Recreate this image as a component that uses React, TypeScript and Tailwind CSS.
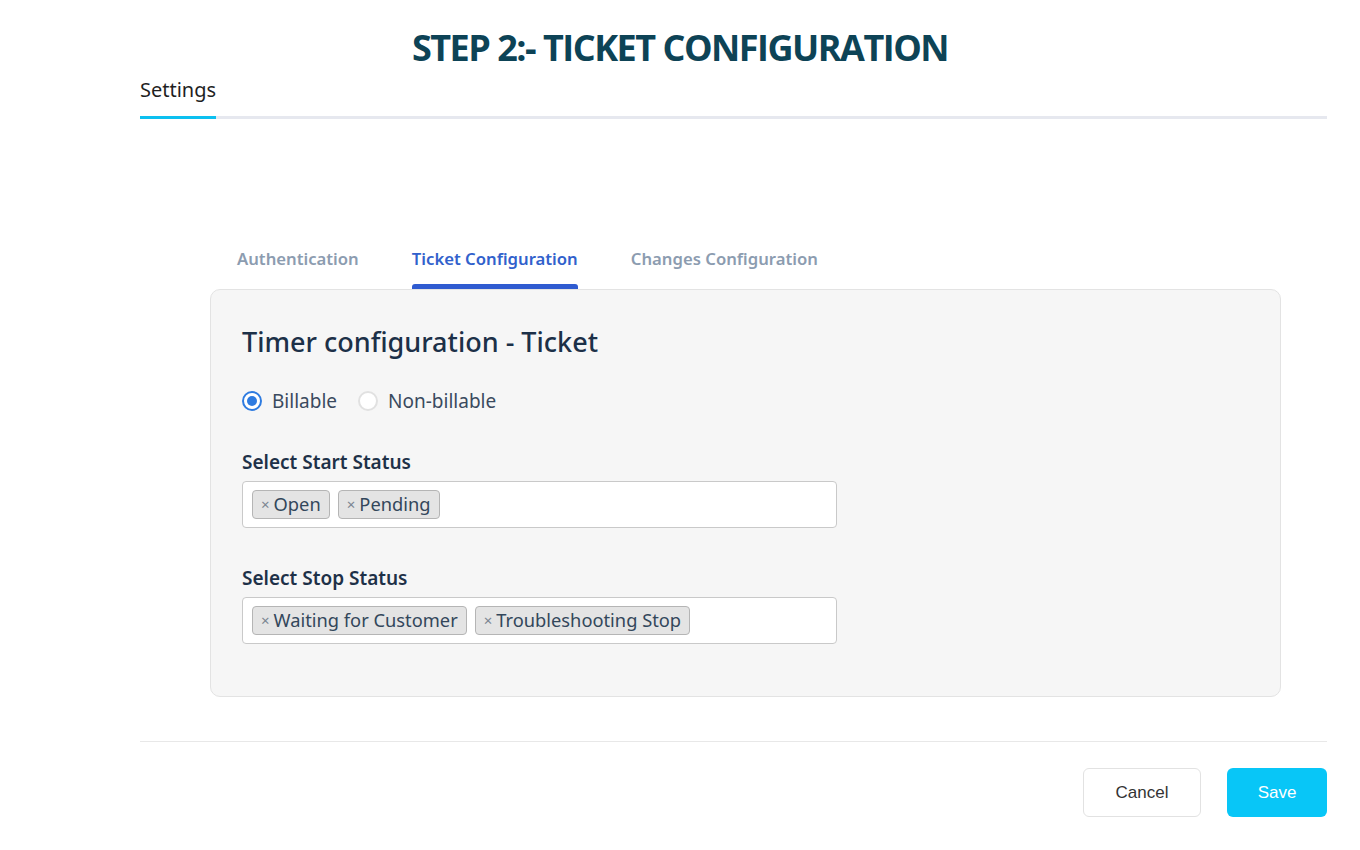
import { useState } from 'react';

type Chip = { id: string; label: string };

function ChipInput({ chips }: { chips: Chip[] }) {
  return (
    <div className="flex h-[47px] w-[595px] items-center gap-[8px] rounded-[4px] border border-[#c9c9c9] bg-white px-[9px]">
      {chips.map((c) => (
        <span
          key={c.id}
          className="flex h-[29px] items-center gap-[4px] rounded-[4px] border border-[#b5b5b5] bg-[#e4e4e4] px-[8px] text-[18.3px] leading-none text-[#33475b]"
        >
          <span className="text-[15px] text-[#7a8591]">×</span>
          {c.label}
        </span>
      ))}
    </div>
  );
}

function Radio({ checked, label, onSelect }: { checked: boolean; label: string; onSelect: () => void }) {
  return (
    <label className="flex cursor-pointer items-center gap-[10px]" onClick={onSelect}>
      <span
        className={`flex h-[20px] w-[20px] items-center justify-center rounded-full border-2 bg-white ${
          checked ? 'border-[#2e7be0]' : 'border-[#e1e1e1]'
        }`}
      >
        {checked ? <span className="h-[10px] w-[10px] rounded-full bg-[#2e7be0]" /> : null}
      </span>
      {label}
    </label>
  );
}

export default function App() {
  const [tab, setTab] = useState('ticket');
  const [billing, setBilling] = useState<'billable' | 'non'>('billable');

  const tabs = [
    { key: 'auth', label: 'Authentication' },
    { key: 'ticket', label: 'Ticket Configuration' },
    { key: 'changes', label: 'Changes Configuration' },
  ];

  return (
    <div className="h-[850px] w-[1360px] bg-white" style={{ fontFamily: '"Noto Sans", sans-serif' }}>
      <h1
        className="pt-[25px] text-center text-[36px] font-bold leading-[46px] tracking-[-1.5px] text-[#0d4356]"
        style={{ fontFamily: '"Open Sans", sans-serif' }}
      >
        STEP 2:- TICKET CONFIGURATION
      </h1>

      <div className="ml-[140px] mr-[33px] mt-[5px]">
        <div className="flex">
          <div className="flex flex-col">
            <span className="pb-[12px] text-[20px] leading-[28px] text-[#1f1f1f]">Settings</span>
            <div className="h-[3px] bg-[#0cc0f0]" />
          </div>
          <div className="flex flex-1 flex-col justify-end">
            <div className="h-[3px] bg-[#e6e8ef]" />
          </div>
        </div>

        <div className="mt-[123px] pl-[70px] pr-[46px]">
          <div className="flex pl-[18px]">
            {tabs.map((t) => (
              <button
                key={t.key}
                type="button"
                onClick={() => setTab(t.key)}
                className={`mr-[35px] flex flex-col items-center px-[9px] pt-[5px] text-[16.7px] font-semibold leading-[24px] ${
                  tab === t.key ? 'text-[#3161cc]' : 'text-[#8c9cb0]'
                }`}
              >
                <span className="pb-[13px]">{t.label}</span>
                <span className={`h-[5px] w-full rounded-t-[3px] ${tab === t.key ? 'bg-[#2f5bd0]' : 'bg-transparent'}`} />
              </button>
            ))}
          </div>

          <div className="h-[408px] rounded-[10px] border border-[#e3e3e3] bg-[#f6f6f6] px-[31px] pt-[33px]">
            <h2 className="text-[27px] font-medium leading-[38px] text-[#1c3048]">Timer configuration - Ticket</h2>

            <div className="mt-[26px] flex items-center gap-[21px] text-[19px] text-[#3a4a5e]">
              <Radio checked={billing === 'billable'} label="Billable" onSelect={() => setBilling('billable')} />
              <Radio checked={billing === 'non'} label="Non-billable" onSelect={() => setBilling('non')} />
            </div>

            <div className="mt-[33px] text-[19px] font-semibold leading-[26px] text-[#1e3148]">Select Start Status</div>
            <div className="mt-[6px]">
              <ChipInput
                chips={[
                  { id: 'open', label: 'Open' },
                  { id: 'pending', label: 'Pending' },
                ]}
              />
            </div>

            <div className="mt-[37px] text-[19px] font-semibold leading-[26px] text-[#1e3148]">Select Stop Status</div>
            <div className="mt-[6px]">
              <ChipInput
                chips={[
                  { id: 'waiting', label: 'Waiting for Customer' },
                  { id: 'trouble', label: 'Troubleshooting Stop' },
                ]}
              />
            </div>
          </div>
        </div>

        <div className="mt-[44px] h-[1px] bg-[#e8e8e8]" />

        <div className="mt-[26px] flex justify-end gap-[26px]" style={{ fontFamily: '"Liberation Sans", sans-serif' }}>
          <button
            type="button"
            className="h-[49px] w-[118px] rounded-[6px] border border-[#e2e2e2] bg-white text-[17px] text-[#333]"
          >
            Cancel
          </button>
          <button type="button" className="h-[49px] w-[100px] rounded-[6px] bg-[#08c6f7] text-[17px] text-white">
            Save
          </button>
        </div>
      </div>
    </div>
  );
}
